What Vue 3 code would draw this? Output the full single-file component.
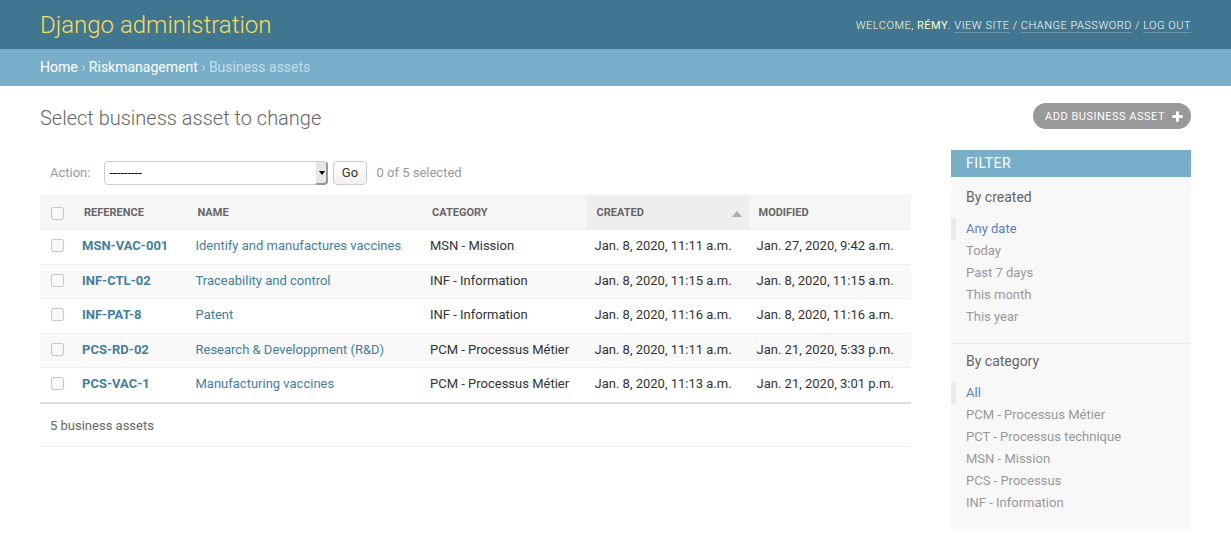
<template>
  <div class="page">
    <header class="topbar">
      <h1 class="brand">Django administration</h1>
      <div class="usertools">
        Welcome, <strong>Rémy</strong>.
        <a href="#">View site</a> / <a href="#">Change password</a> / <a href="#">Log out</a>
      </div>
    </header>
    <nav class="crumbs">
      <a href="#">Home</a> › <a href="#">Riskmanagement</a> › Business assets
    </nav>

    <main class="content">
      <div class="title-row">
        <h1 class="title">Select business asset to change</h1>
        <a href="#" class="add-btn">
          Add business asset
          <svg width="11" height="11" viewBox="0 0 11 11"><path d="M5.5 1.5v8M1.5 5.5h8" stroke="#fff" stroke-width="3" stroke-linecap="round" fill="none" /></svg>
        </a>
      </div>

      <div class="columns">
        <section class="results">
          <div class="actions">
            <label class="action-label">Action:</label>
            <div class="select-wrap">
              <select class="action-select"><option>---------</option></select>
              <span class="select-arrow"></span>
            </div>
            <button class="go">Go</button>
            <span class="counter">0 of 5 selected</span>
          </div>

          <table class="grid">
            <thead>
              <tr>
                <th class="col-check"><input type="checkbox" /></th>
                <th class="col-ref">Reference</th>
                <th class="col-name">Name</th>
                <th class="col-cat">Category</th>
                <th class="col-created sorted">
                  Created
                  <svg class="sort" width="10" height="6" viewBox="0 0 10 6"><path d="M5 0l5 6H0z" fill="#aaa" /></svg>
                </th>
                <th class="col-mod">Modified</th>
              </tr>
            </thead>
            <tbody>
              <tr v-for="row in rows" :key="row.ref">
                <td><input type="checkbox" /></td>
                <th><a href="#">{{ row.ref }}</a></th>
                <td><a href="#">{{ row.name }}</a></td>
                <td>{{ row.category }}</td>
                <td>{{ row.created }}</td>
                <td>{{ row.modified }}</td>
              </tr>
            </tbody>
          </table>

          <p class="paginator">5 business assets</p>
        </section>

        <aside class="filter">
          <h2 class="filter-head">Filter</h2>
          <div v-for="group in filters" :key="group.title" class="filter-group">
            <h3>{{ group.title }}</h3>
            <ul>
              <li v-for="(item, i) in group.items" :key="item" :class="{ selected: i === 0 }">
                <a href="#">{{ item }}</a>
              </li>
            </ul>
          </div>
        </aside>
      </div>
    </main>
  </div>
</template>

<script setup>
const rows = [
  { ref: 'MSN-VAC-001', name: 'Identify and manufactures vaccines', category: 'MSN - Mission', created: 'Jan. 8, 2020, 11:11 a.m.', modified: 'Jan. 27, 2020, 9:42 a.m.' },
  { ref: 'INF-CTL-02', name: 'Traceability and control', category: 'INF - Information', created: 'Jan. 8, 2020, 11:15 a.m.', modified: 'Jan. 8, 2020, 11:15 a.m.' },
  { ref: 'INF-PAT-8', name: 'Patent', category: 'INF - Information', created: 'Jan. 8, 2020, 11:16 a.m.', modified: 'Jan. 8, 2020, 11:16 a.m.' },
  { ref: 'PCS-RD-02', name: 'Research & Developpment (R&D)', category: 'PCM - Processus Métier', created: 'Jan. 8, 2020, 11:11 a.m.', modified: 'Jan. 21, 2020, 5:33 p.m.' },
  { ref: 'PCS-VAC-1', name: 'Manufacturing vaccines', category: 'PCM - Processus Métier', created: 'Jan. 8, 2020, 11:13 a.m.', modified: 'Jan. 21, 2020, 3:01 p.m.' },
]

const filters = [
  { title: 'By created', items: ['Any date', 'Today', 'Past 7 days', 'This month', 'This year'] },
  { title: 'By category', items: ['All', 'PCM - Processus Métier', 'PCT - Processus technique', 'MSN - Mission', 'PCS - Processus', 'INF - Information'] },
]
</script>

<style>
html, body { margin: 0; background: #fff; }
</style>

<style scoped>
.page { font-family: Roboto, "Liberation Sans", sans-serif; font-size: 14px; color: #333; }
a { text-decoration: none; }

.topbar {
  display: flex; justify-content: space-between; align-items: center;
  height: 49px; box-sizing: border-box; padding: 0 40px;
  background: #417690; color: #ffc;
}
.brand { margin: 0; font-size: 24px; font-weight: 300; color: #f5dd5d; }
.usertools { padding-top: 1px; font-size: 11px; font-weight: 300; letter-spacing: .5px; text-transform: uppercase; color: #ffc; }
.usertools strong { font-weight: 400; }
.usertools a { color: #fff; border-bottom: 1px solid rgba(255,255,255,.25); }

.crumbs {
  height: 37px; box-sizing: border-box; padding: 10px 40px;
  background: #79aec8; color: #c4dce8; font-size: 14px; line-height: 17px;
}
.crumbs a { color: #fff; }

.content { padding: 17px 40px 0; }
.title-row { display: flex; justify-content: space-between; align-items: flex-start; height: 47px; }
.title { margin: 3px 0 0; font-size: 20px; font-weight: 300; line-height: 24px; color: #666; }
.add-btn {
  display: flex; align-items: center; gap: 7px; height: 26px; box-sizing: border-box;
  padding: 0 8px 0 12px; border-radius: 15px; background: #999; color: #fff;
  font-size: 11px; letter-spacing: .5px; text-transform: uppercase;
}

.columns { display: flex; justify-content: space-between; align-items: flex-start; }
.results { width: 871px; }

.actions { display: flex; align-items: center; height: 45px; padding-left: 10px; box-sizing: border-box; color: #999; font-size: 13px; }
.action-label { margin-right: 14px; }
.select-wrap { position: relative; width: 224px; height: 24px; }
.action-select {
  display: block; width: 100%; height: 100%; box-sizing: border-box; padding: 0 4px;
  appearance: none; border: 1px solid #ccc; border-radius: 4px; background: #fff; color: #000;
  font-family: Roboto, sans-serif; font-size: 13px;
}
.select-arrow {
  position: absolute; right: 0; top: 1px; bottom: 0; width: 12px; box-sizing: border-box;
  background: #e6e6e6; border-right: 2px solid #999; border-bottom: 2px solid #999; border-radius: 0 2px 4px 0;
}
.select-arrow::after {
  content: ""; position: absolute; left: 3px; top: 9px;
  border-left: 3px solid transparent; border-right: 3px solid transparent; border-top: 4px solid #000;
}
.go {
  height: 24px; width: 34px; margin-left: 5px; padding: 0 1px 0 0;
  border: 1px solid #ccc; border-radius: 4px; background: linear-gradient(#fff, #f0f0f0);
  color: #333; font-family: Roboto, sans-serif; font-size: 13px;
}
.counter { margin-left: 9px; }

.grid { width: 100%; border-collapse: collapse; table-layout: fixed; font-size: 13px; line-height: 16px; }
.grid input {
  appearance: none; display: block; width: 13px; height: 13px; margin: 1px 0 0; box-sizing: border-box;
  border: 1px solid #c8c8c8; border-radius: 3px; background: #fafafa; box-shadow: 0 0 1px rgba(0,0,0,.15);
}
.grid thead th {
  height: 34.4px; box-sizing: border-box; padding: 0 8px 0 10px; text-align: left; vertical-align: middle;
  background: #f6f6f6; border-top: 1px solid #eee; border-bottom: 1px solid #eee;
  font-size: 11px; font-weight: 700; text-transform: uppercase; color: #666;
}
.grid thead th.col-check { padding-left: 11px; }
.grid thead th.sorted { background: #eee; position: relative; }
.sort { position: absolute; right: 7px; top: 15px; }
.col-check { width: 34px; }
.col-ref { width: 113.5px; }
.col-name { width: 234.5px; }
.col-cat { width: 164.5px; }
.col-created { width: 162px; }

.grid tbody td, .grid tbody th {
  height: 34.4px; box-sizing: border-box; padding: 8px; text-align: left; vertical-align: top;
  border-bottom: 1px solid #eee; font-weight: 400; color: #333;
}
.grid tbody td:first-child { padding-left: 11px; }
.grid tbody th a { font-weight: 700; }
.grid tbody a { color: #447e9b; }
.grid tbody tr:nth-child(even) td, .grid tbody tr:nth-child(even) th { background: #f9f9f9; }
.grid tbody tr:last-child td, .grid tbody tr:last-child th { height: 35.4px; border-bottom: 2px solid #ddd; }

.paginator {
  margin: 0; height: 43px; box-sizing: border-box; padding: 0 10px; line-height: 43px;
  border-bottom: 1px solid #eee; font-size: 13px; color: #666;
}

.filter { width: 240px; height: 379px; box-sizing: border-box; background: #f8f8f8; }
.filter-head {
  margin: 0; height: 27px; padding: 0 15px; line-height: 27px; box-sizing: border-box;
  background: #79aec8; color: #fff; font-size: 14px; font-weight: 400; text-transform: uppercase; letter-spacing: .5px;
}
.filter-group { border-bottom: 1px solid #eaeaea; padding-bottom: 15px; }
.filter-group:last-child { border-bottom: 0; }
.filter-group h3 { margin: 0; padding: 12px 15px 0; font-size: 14px; font-weight: 400; line-height: 16px; color: #666; }
.filter-group + .filter-group h3 { padding-top: 9px; }
.filter-group ul { margin: 13px 0 0; padding: 0; list-style: none; }
.filter-group li { height: 22px; line-height: 22px; padding-left: 15px; font-size: 13px; }
.filter-group li a { color: #999; }
.filter-group li.selected { padding-left: 10px; border-left: 5px solid #eaeaea; }
.filter-group li.selected a { color: #5b80b2; }
</style>
